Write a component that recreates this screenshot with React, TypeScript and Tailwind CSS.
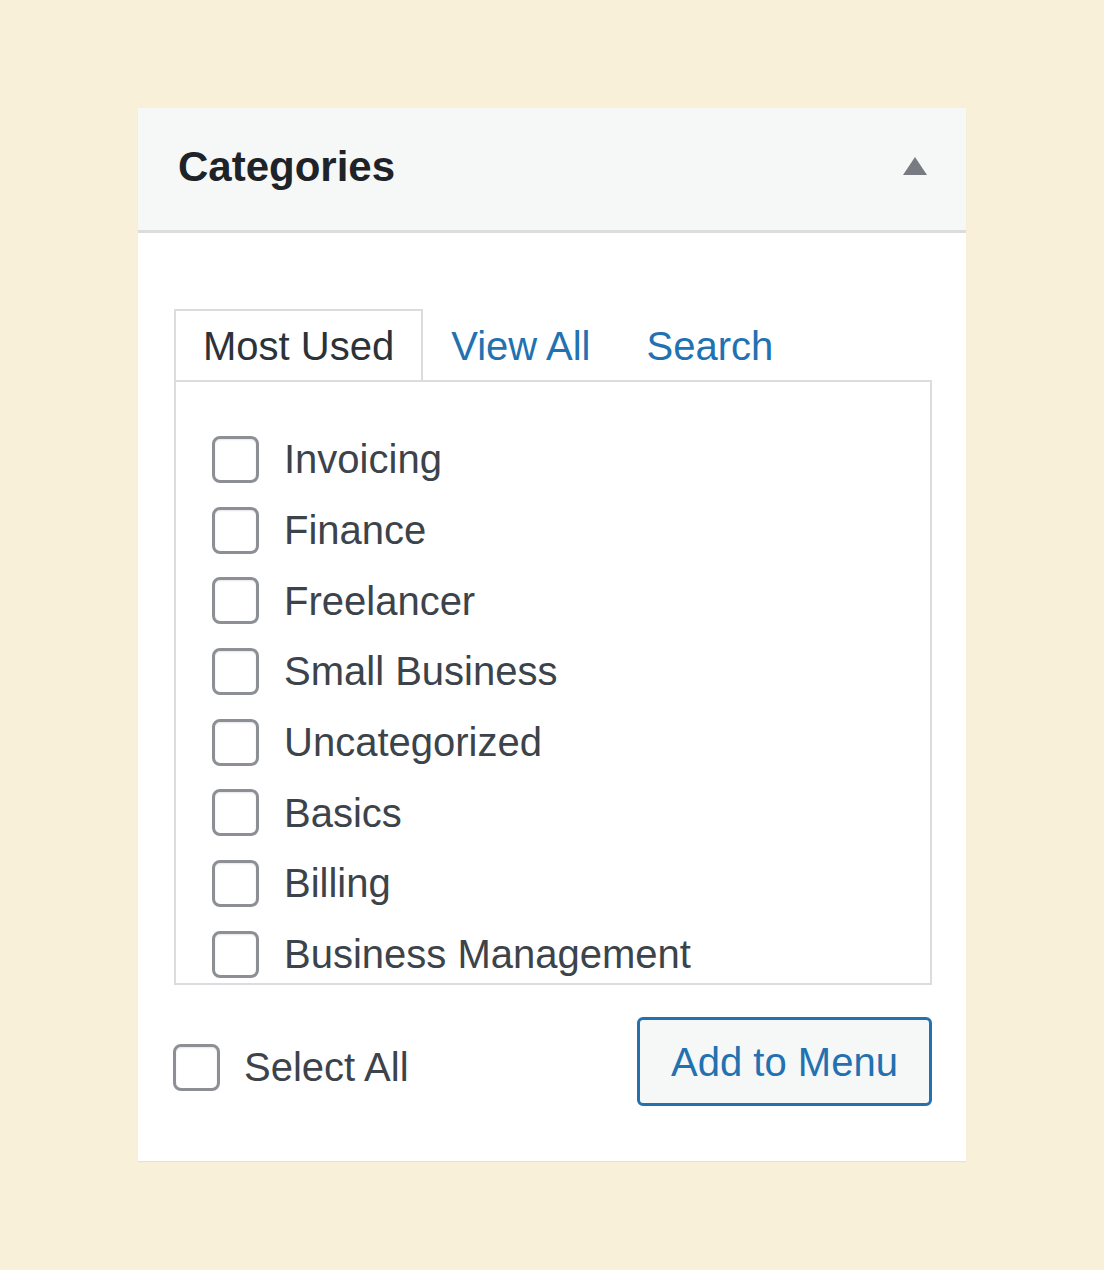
import React from 'react';

const categories = [
    'Invoicing',
    'Finance',
    'Freelancer',
    'Small Business',
    'Uncategorized',
    'Basics',
    'Billing',
    'Business Management',
];

const Checkbox: React.FC = () => (
    <span className="block w-[47px] h-[47px] flex-shrink-0 rounded-[8px] border-[3px] border-[#8c8f94] bg-white shadow-[inset_0_1px_2px_rgba(0,0,0,0.1)]" />
);

export default function App() {
    return (
        <div
            className="min-h-[1270px] w-full bg-[#f8f0d9] pt-[108px] pl-[138px]"
            style={{ fontFamily: '"Liberation Sans", Arial, sans-serif' }}
        >
            <div className="w-[828px] bg-white shadow-[0_1px_1px_rgba(0,0,0,0.06)]">
                {/* Header */}
                <div className="flex items-center justify-between bg-[#f6f7f7] border-b-[3px] border-[#dcdcde] pl-[40px] pr-[39px] pt-[38px] pb-[42px]">
                    <h3 className="text-[42px] leading-[42px] font-bold text-[#1d2327]">Categories</h3>
                    <svg width="24" height="18" viewBox="0 0 24 18" className="-mt-[2px]">
                        <polygon points="12,0 24,18 0,18" fill="#787c82" />
                    </svg>
                </div>

                {/* Body */}
                <div className="pl-[36px] pr-[34px] pt-[76px] pb-[55px]">
                    {/* Tabs */}
                    <div className="flex items-end text-[40px] leading-[48px]">
                        <div className="bg-white border-t-2 border-x-2 border-[#dcdcde] px-[27px] pt-[11px] pb-[10px] text-[#2c3338]">
                            Most Used
                        </div>
                        <div className="px-[28px] pt-[11px] pb-[10px] text-[#2271b1]">View All</div>
                        <div className="px-[28px] pt-[11px] pb-[10px] text-[#2271b1]">Search</div>
                    </div>

                    {/* List box */}
                    <div className="h-[605px] border-2 border-[#dcdcde] overflow-hidden pl-[36px] pt-[42px]">
                        {categories.map((name) => (
                            <label key={name} className="flex items-center h-[70.7px] gap-[25px]">
                                <Checkbox />
                                <span className="text-[40px] leading-[48px] text-[#3c434a] whitespace-nowrap">{name}</span>
                            </label>
                        ))}
                    </div>

                    {/* Footer */}
                    <div className="flex items-start justify-between mt-[32px]">
                        <label className="flex items-center gap-[24px] pt-[26px] -ml-[1px]">
                            <Checkbox />
                            <span className="text-[40px] leading-[48px] text-[#3c434a]">Select All</span>
                        </label>
                        <button className="h-[89px] w-[295px] rounded-[6px] border-[3px] border-[#2271b1] bg-[#f6f7f7] text-[40px] leading-[48px] text-[#2271b1]">
                            Add to Menu
                        </button>
                    </div>
                </div>
            </div>
        </div>
    );
}
